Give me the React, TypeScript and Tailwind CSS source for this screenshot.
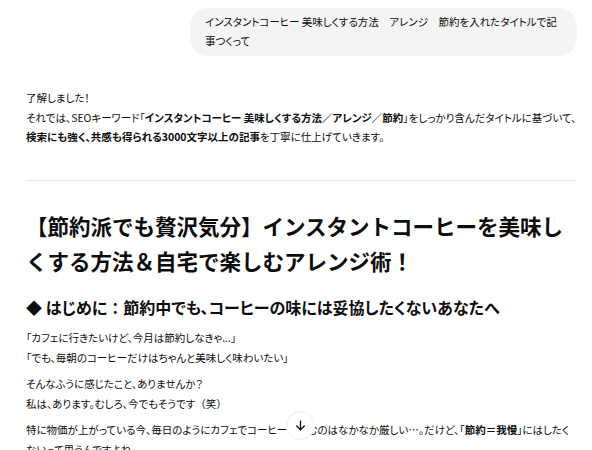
import React from "react";

export default function App() {
  return (
    <div className="relative h-[450px] w-[592px] overflow-hidden bg-white text-[#0d0d0d] font-['Noto_Sans_CJK_JP','Noto_Sans',sans-serif] [font-feature-settings:'palt']">
      <div className="pl-[26px] pr-[15px] pt-[8px]">
        <div className="flex justify-end">
          <div className="max-w-[387px] rounded-[18px] bg-[#f4f4f4] pl-[15px] pr-[14px] pt-[4px] pb-[6px] text-[10.5px] leading-[19px]">
            インスタントコーヒー 美味しくする方法　アレンジ　節約を入れたタイトルで記事つくって
          </div>
        </div>

        <div className="mt-[32px] text-[10.5px] leading-[19.5px]">
          <p>了解しました！</p>
          <p>
            <span className="whitespace-nowrap">
              それでは、SEOキーワード「<b className="font-bold">インスタントコーヒー 美味しくする方法／アレンジ／節約</b>」をしっかり含んだタイトルに基づいて、
            </span>
            <br />
            <b className="font-bold">検索にも強く、共感も得られる3000文字以上の記事</b>を丁寧に仕上げていきます。
          </p>
        </div>

        <div className="mt-[33px] h-px bg-[#e5e5e5]" />

        <h1 className="mt-[27px] text-[21.5px] leading-[35px] font-bold [font-feature-settings:normal]">
          【節約派でも贅沢気分】インスタントコーヒーを美味しくする方法＆自宅で楽しむアレンジ術！
        </h1>

        <h3 className="mt-[17px] text-[16px] leading-[24px] font-bold">
          ◆ はじめに<span className="[font-feature-settings:normal]">：</span>節約中でも、コーヒーの味には妥協したくないあなたへ
        </h3>

        <div className="mt-[9px] text-[10.5px] leading-[20px]">
          <p>
            「カフェに行きたいけど、今月は節約しなきゃ...」
            <br />
            「でも、毎朝のコーヒーだけはちゃんと美味しく味わいたい」
          </p>
          <p className="mt-[6px]">
            そんなふうに感じたこと、ありませんか？
            <br />
            私は、あります。むしろ、今でもそうです<span className="[font-feature-settings:normal]">（笑）</span>
          </p>
          <p className="mt-[6px]">
            特に物価が上がっている今、毎日のようにカフェでコーヒーを飲むのはなかなか厳しい…。だけど、「<b className="font-bold">節約＝我慢</b>」にはしたくないって思うんですよね。
          </p>
        </div>
      </div>

      <button className="absolute left-[286px] top-[411px] flex h-[29px] w-[29px] items-center justify-center rounded-full border border-[#ececec] bg-white">
        <svg width="13" height="13" viewBox="0 0 24 24" fill="none" stroke="#0d0d0d" strokeWidth="2.4" strokeLinecap="round" strokeLinejoin="round">
          <path d="M12 4v16" />
          <path d="M5 13l7 7 7-7" />
        </svg>
      </button>
    </div>
  );
}
